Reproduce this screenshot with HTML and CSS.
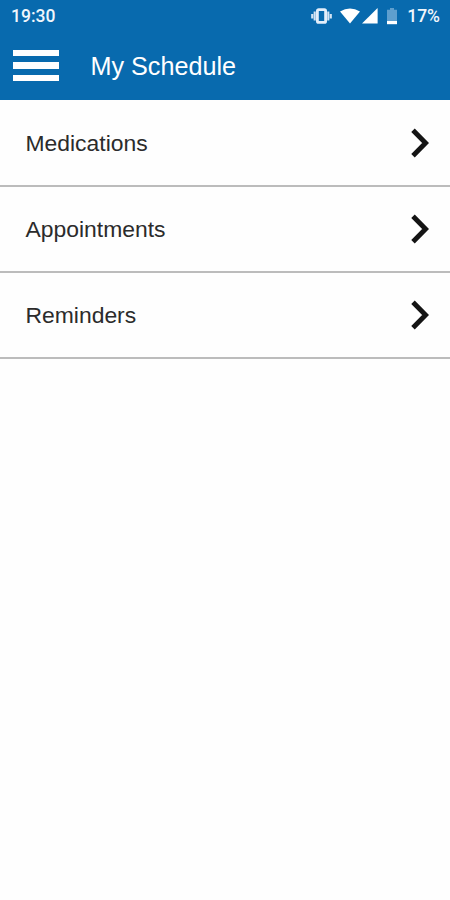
FILE: index.html
```html
<!DOCTYPE html>
<html lang="en">
<head>
    <meta charset="UTF-8">
    <meta name="viewport" content="width=device-width, initial-scale=1.0">
    <title>My Schedule</title>
    <link rel="stylesheet" href="styles.css">
</head>
<body>
    <header class="header">
        <div class="status-bar">
            <span class="time">19:30</span>
            <div class="status-icons">
                <svg class="icon-vibrate" width="21" height="16" viewBox="0 0 21 16">
                    <rect x="6.4" y="1.6" width="8.2" height="12.8" rx="1.2" fill="none" stroke="#e3eefa" stroke-width="2.8"/>
                    <path d="M3.7 3.5v9M17.3 3.5v9M1.2 6v4.4M19.8 6v4.4" fill="none" stroke="#d3e4f4" stroke-width="2.1"/>
                </svg>
                <svg class="icon-wifi" width="20" height="16" viewBox="0 0 20 16">
                    <path d="M0 3.6Q10-2.6 20 3.6L10 15.6z" fill="#fff"/>
                </svg>
                <svg class="icon-signal" width="16" height="16" viewBox="0 0 16 16">
                    <path d="M15.6 0v15.4H0z" fill="#fff"/>
                </svg>
                <svg class="icon-battery" width="10" height="17" viewBox="0 0 10 17">
                    <path d="M3 0h4v1.8h3V13H0V1.8h3z" fill="#5f9fce"/>
                    <path d="M0 13h10v3.2H0z" fill="#fff"/>
                </svg>
                <span class="battery-level">17%</span>
            </div>
        </div>
        <div class="toolbar">
            <button class="menu-btn" aria-label="Menu">
                <span></span>
                <span></span>
                <span></span>
            </button>
            <h1>My Schedule</h1>
        </div>
    </header>

    <nav class="list">
        <a class="list-item" href="#">
            <span>Medications</span>
            <svg class="chevron" width="18" height="30" viewBox="0 0 18 30">
                <path d="M2 2.2L14.6 15L2 27.8" />
            </svg>
        </a>
        <a class="list-item" href="#">
            <span>Appointments</span>
            <svg class="chevron" width="18" height="30" viewBox="0 0 18 30">
                <path d="M2 2.2L14.6 15L2 27.8" />
            </svg>
        </a>
        <a class="list-item" href="#">
            <span>Reminders</span>
            <svg class="chevron" width="18" height="30" viewBox="0 0 18 30">
                <path d="M2 2.2L14.6 15L2 27.8" />
            </svg>
        </a>
    </nav>
</body>
</html>
```

FILE: styles.css
```css
* {
    box-sizing: border-box;
}
body {
    margin: 0;
    min-height: 100vh;
    background-color: #fefefe;
    font-family: "Liberation Sans", Arial, Helvetica, sans-serif;
}
.header {
    height: 100px;
    background-color: #086aae;
    color: #fff;
}
.status-bar {
    display: flex;
    justify-content: space-between;
    height: 32px;
    padding: 0 10px 0 11px;
    font-family: Roboto, sans-serif;
    font-size: 17.5px;
    font-weight: 500;
    line-height: 33px;
    color: #f0f6fc;
}
.status-icons {
    display: flex;
    align-items: center;
}
.icon-wifi {
    margin-left: 8px;
}
.icon-signal {
    margin-left: 2px;
}
.icon-battery {
    margin-left: 9px;
}
.battery-level {
    margin-left: 10px;
}
.toolbar {
    display: flex;
    align-items: center;
    height: 67px;
    padding-left: 12.5px;
}
.menu-btn {
    display: flex;
    flex-direction: column;
    gap: 6px;
    width: 46px;
    padding: 0;
    border: none;
    background: none;
    cursor: pointer;
}
.menu-btn span {
    height: 6.4px;
    background-color: #fff;
}
.toolbar h1 {
    margin: 0 0 0 32px;
    font-size: 25.2px;
    font-weight: 400;
    line-height: 30px;
}
.list {
    padding-top: 1px;
}
.list-item {
    display: flex;
    align-items: center;
    justify-content: space-between;
    height: 86px;
    padding: 0 21px 0 25.5px;
    border-bottom: 2px solid #bcbcbc;
    font-size: 22.9px;
    color: #2b2b2b;
    text-decoration: none;
}
.chevron path {
    fill: none;
    stroke: #141414;
    stroke-width: 4.9;
}
```
